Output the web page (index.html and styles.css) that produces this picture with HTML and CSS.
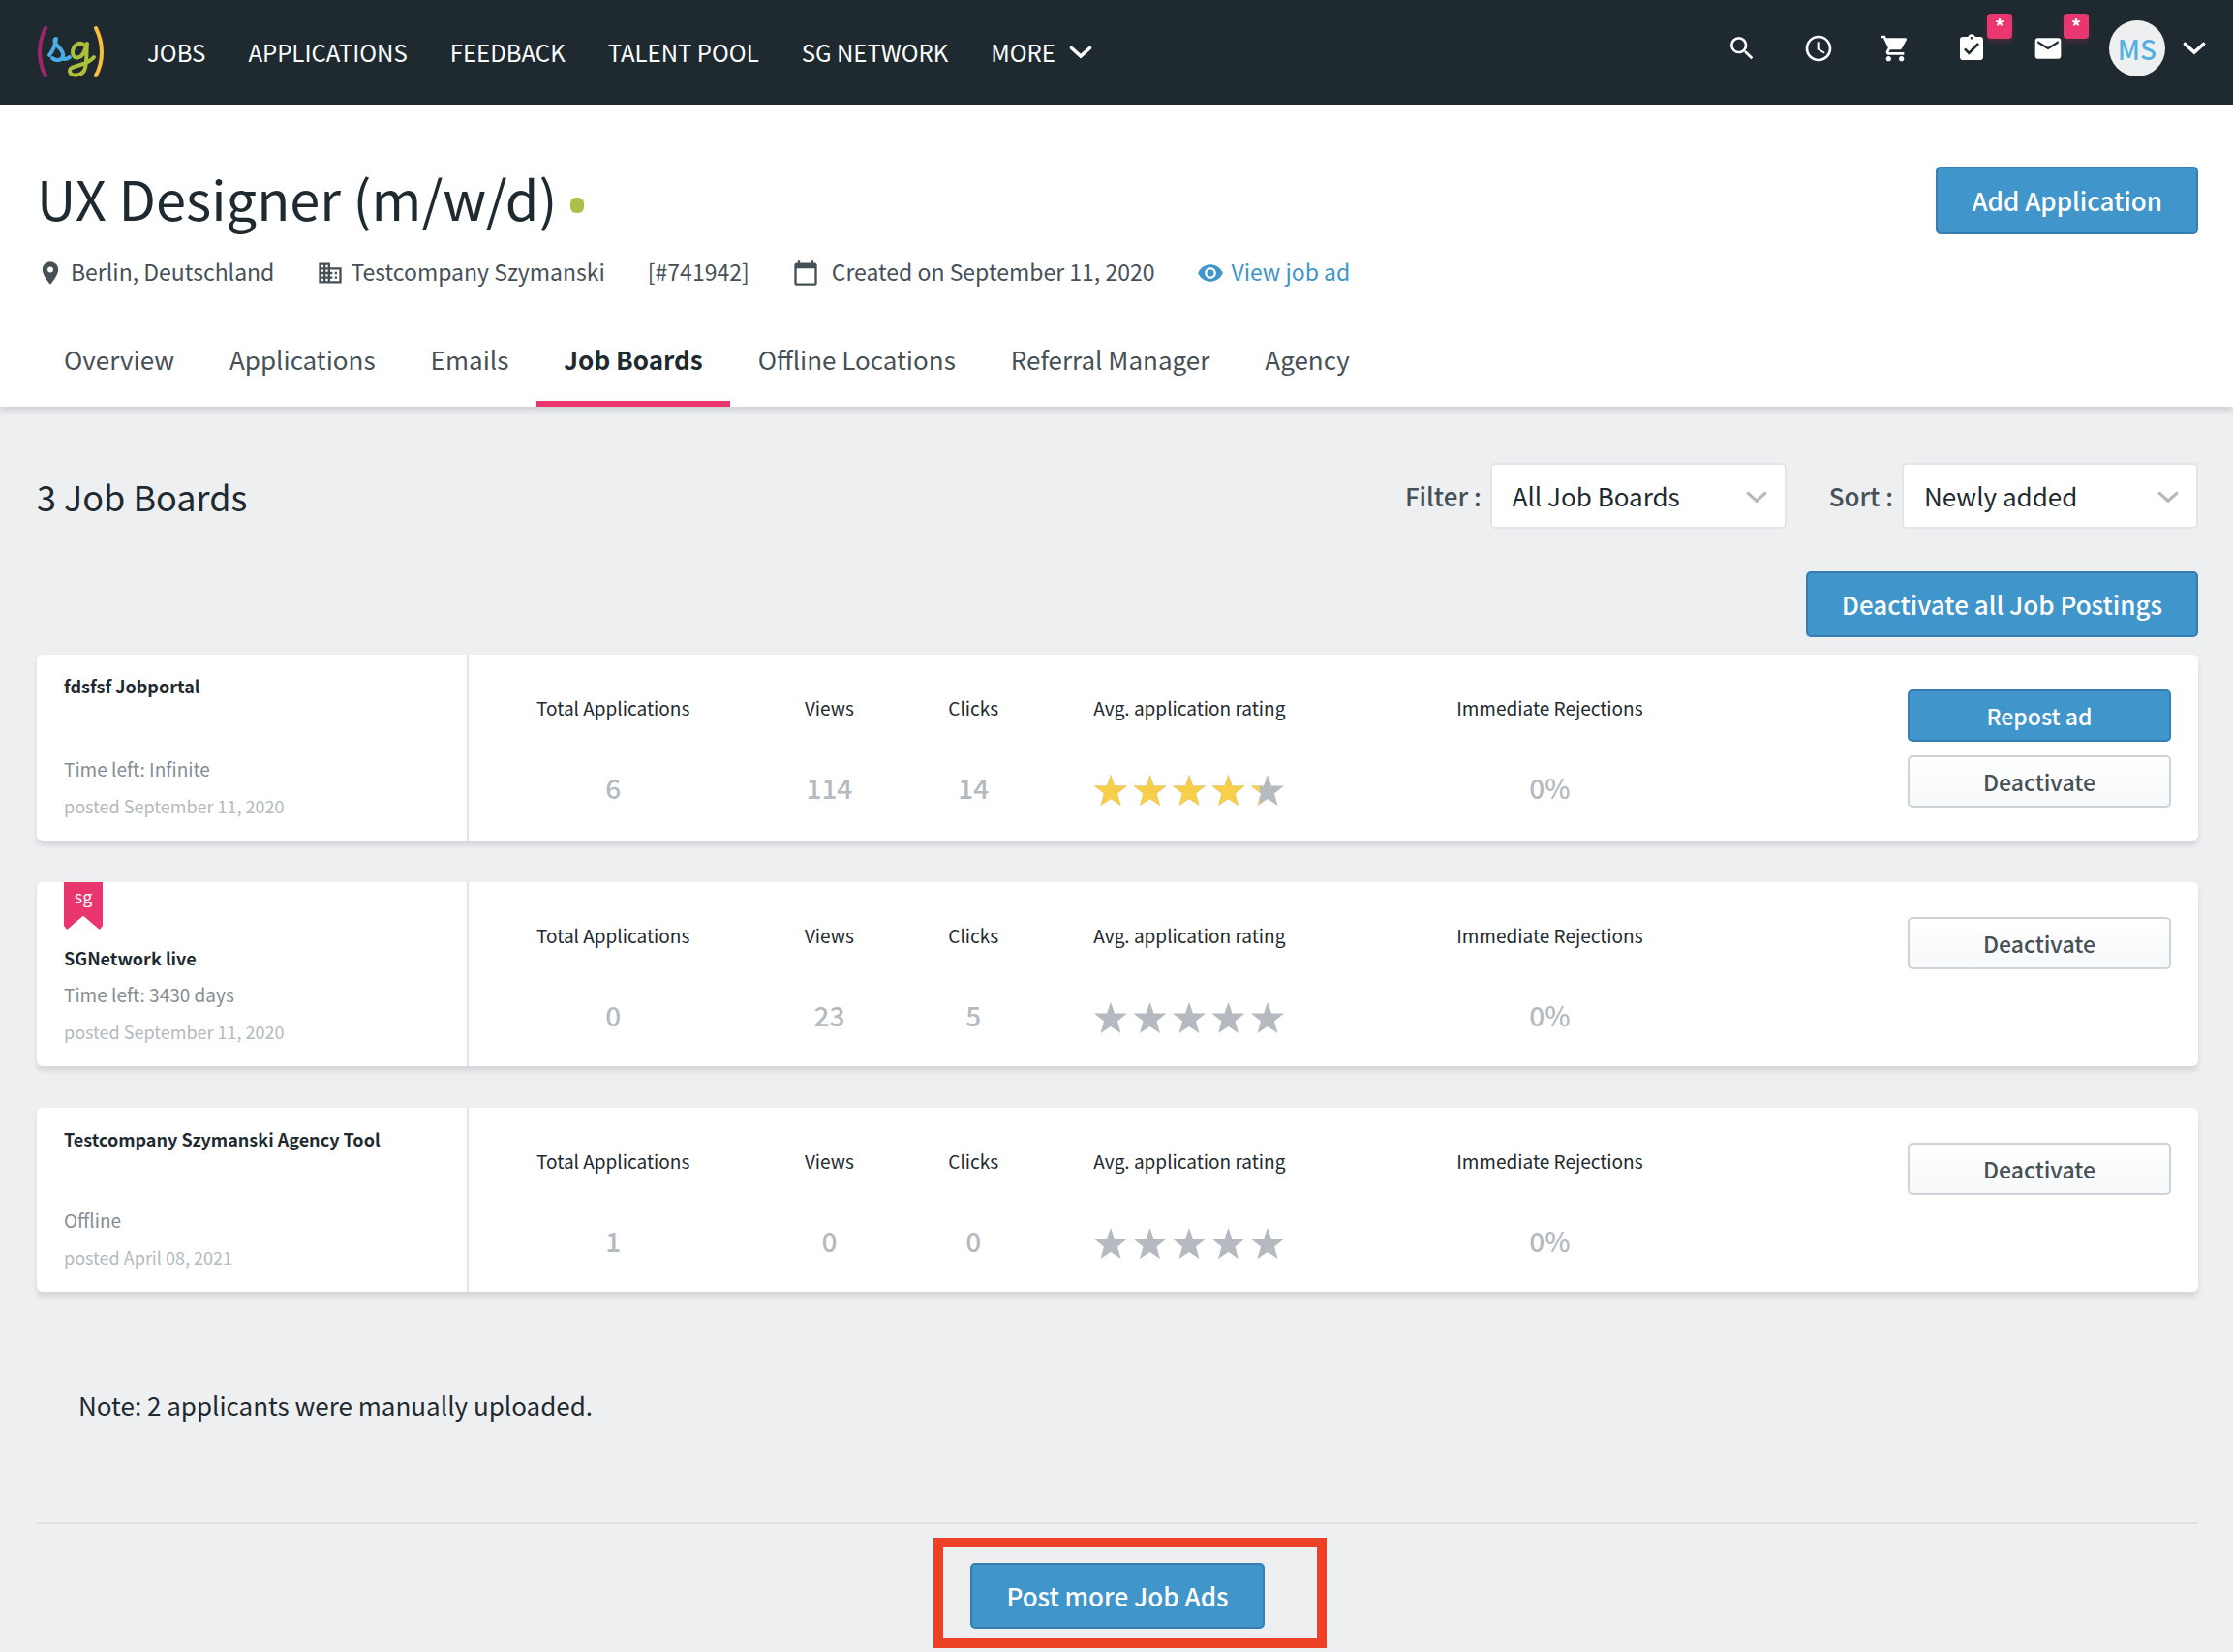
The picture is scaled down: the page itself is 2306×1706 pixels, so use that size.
FILE: index.html
```html
<!DOCTYPE html>
<html lang="en">

<head>
    <meta charset="UTF-8">
    <meta name="viewport" content="width=device-width, initial-scale=1.0">
    <title>UX Designer (m/w/d)</title>
    <link rel="stylesheet" href="styles.css">
</head>

<body>
    <!-- icons that are used more than once -->
    <svg width="0" height="0" class="sprite" aria-hidden="true">
        <symbol id="chevron" viewBox="0 0 24 14">
            <path d="M2.500 2.500L12 11l9.500-8.500" fill="none" stroke="currentColor" stroke-width="3.600" stroke-linecap="round" />
        </symbol>
        <symbol id="stars" viewBox="0 0 196 32">
            <path d="M17 0l4 11.500h13l-10 8 3.500 12.500L17 25l-10.500 7L10 19.500l-10-8h13z" />
            <path d="M57.500 0l4 11.500h13l-10 8L68 32l-10.500-7L47 32l3.500-12.500-10-8h13z" />
            <path d="M98 0l4 11.500h13l-10 8 3.500 12.500L98 25l-10.500 7L91 19.500l-10-8h13z" />
            <path d="M138.500 0l4 11.500h13l-10 8L149 32l-10.500-7L128 32l3.500-12.500-10-8h13z" />
            <path d="M179 0l4 11.500h13l-10 8 3.500 12.500L179 25l-10.500 7 3.500-12.500-10-8h13z" />
        </symbol>
    </svg>

    <header class="topbar">
        <a href="#" class="logo" aria-label="sg">
            <svg width="72" height="54" viewBox="0 0 72 54" fill="none" stroke-linecap="round" stroke-linejoin="round">
                <path d="M9 2C1 18 1 36 9 51" stroke="#a0246c" stroke-width="4" />
                <path d="M61 2c8 16 8 34 0 49" stroke="#f8bf3c" stroke-width="4" />
                <path d="M13 30c4-5 6-10 7-17-3 1-1 5 2 8 4 4 6 7 5 10-1 5-8 5-11 2M26 33c3 2 5 1 8-1" stroke="#4aaee6" stroke-width="4" />
                <path d="M50 20c-6-5-13 0-13 7 0 8 9 7 12-1l3-8c-1 9 0 17-2 25-2 9-16 10-16 3 0-6 17-4 25-14" stroke="#aebf3c" stroke-width="4" />
            </svg>
        </a>
        <nav class="mainnav">
            <a href="#">JOBS</a>
            <a href="#">APPLICATIONS</a>
            <a href="#">FEEDBACK</a>
            <a href="#">TALENT POOL</a>
            <a href="#">SG NETWORK</a>
            <a href="#">MORE <svg width="24" height="14"><use href="#chevron" /></svg></a>
        </nav>
        <div class="tools">
            <button class="tool" aria-label="Search">
                <svg width="32" height="32" viewBox="0 0 24 24"><path d="M15.500 14h-.79l-.28-.27A6.471 6.471 0 0 0 16 9.500 6.500 6.500 0 1 0 9.500 16c1.610 0 3.090-.59 4.230-1.570l.27.28v.79l5 4.990L20.490 19l-4.990-5zm-6 0C7.010 14 5 11.990 5 9.500S7.010 5 9.500 5 14 7.010 14 9.500 11.990 14 9.500 14z" /></svg>
            </button>
            <button class="tool" aria-label="History">
                <svg width="32" height="32" viewBox="0 0 24 24"><path d="M11.990 2C6.470 2 2 6.480 2 12s4.470 10 9.990 10C17.520 22 22 17.520 22 12S17.520 2 11.990 2zM12 20c-4.420 0-8-3.580-8-8s3.580-8 8-8 8 3.580 8 8-3.580 8-8 8zm.5-13H11v6l5.250 3.150.75-1.230-4.500-2.670z" /></svg>
            </button>
            <button class="tool" aria-label="Cart">
                <svg width="32" height="32" viewBox="0 0 24 24"><path d="M7 18c-1.100 0-1.990.9-1.990 2S5.900 22 7 22s2-.9 2-2-.9-2-2-2zM1 2v2h2l3.600 7.590-1.350 2.450c-.16.280-.25.610-.25.960 0 1.100.9 2 2 2h12v-2H7.420c-.14 0-.25-.11-.25-.25l.03-.12.900-1.630h7.450c.75 0 1.410-.41 1.750-1.030l3.580-6.490c.08-.14.120-.31.120-.48 0-.55-.45-1-1-1H5.210l-.94-2H1zm16 16c-1.100 0-1.990.9-1.990 2s.89 2 1.990 2 2-.9 2-2-.9-2-2-2z" /></svg>
            </button>
            <button class="tool" aria-label="Tasks">
                <svg width="32" height="32" viewBox="0 0 24 24"><path d="M19 3h-4.180C14.400 1.840 13.300 1 12 1s-2.400.84-2.820 2H5c-1.100 0-2 .9-2 2v14c0 1.100.9 2 2 2h14c1.100 0 2-.9 2-2V5c0-1.100-.9-2-2-2zm-7 0c.55 0 1 .45 1 1s-.45 1-1 1-1-.45-1-1 .45-1 1-1zm-2 14l-4-4 1.410-1.410L10 14.170l6.590-6.590L18 9l-8 8z" /></svg>
                <span class="badge">*</span>
            </button>
            <button class="tool" aria-label="Messages">
                <svg width="32" height="32" viewBox="0 0 24 24"><path d="M20 4H4c-1.100 0-2 .9-2 2v12c0 1.100.9 2 2 2h16c1.100 0 2-.9 2-2V6c0-1.100-.9-2-2-2zm0 4l-8 5-8-5V6l8 5 8-5v2z" /></svg>
                <span class="badge">*</span>
            </button>
            <button class="user" aria-label="Account">
                <span class="avatar">MS</span>
                <svg width="24" height="14"><use href="#chevron" /></svg>
            </button>
        </div>
    </header>

    <section class="jobhead">
        <div class="titlerow">
            <h1>UX Designer (m/w/d)<span class="dot"></span></h1>
            <button class="btn btn-blue btn-add">Add Application</button>
        </div>
        <ul class="meta">
            <li><svg width="28" height="28" viewBox="0 0 24 24"><path d="M12 2C8.130 2 5 5.130 5 9c0 5.250 7 13 7 13s7-7.750 7-13c0-3.870-3.130-7-7-7zm0 9.500a2.500 2.500 0 0 1 0-5 2.500 2.500 0 0 1 0 5z" /></svg>Berlin, Deutschland</li>
            <li><svg width="28" height="28" viewBox="0 0 24 24"><path d="M12 7V3H2v18h20V7H12zM6 19H4v-2h2v2zm0-4H4v-2h2v2zm0-4H4V9h2v2zm0-4H4V5h2v2zm4 12H8v-2h2v2zm0-4H8v-2h2v2zm0-4H8V9h2v2zm0-4H8V5h2v2zm10 12h-8v-2h2v-2h-2v-2h2v-2h-2V9h8v10zm-2-8h-2v2h2v-2zm0 4h-2v2h2v-2z" /></svg>Testcompany Szymanski</li>
            <li>[#741942]</li>
            <li class="created"><svg width="28" height="28" viewBox="0 0 24 24"><path d="M20 3h-1V1h-2v2H7V1H5v2H4c-1.100 0-2 .9-2 2v16c0 1.100.9 2 2 2h16c1.100 0 2-.9 2-2V5c0-1.100-.9-2-2-2zm0 18H4V8h16v13z" /></svg>Created on September 11, 2020</li>
            <li><a href="#"><svg width="28" height="28" viewBox="0 0 24 24"><path d="M12 4.500C7 4.500 2.730 7.610 1 12c1.730 4.390 6 7.500 11 7.500s9.270-3.110 11-7.500c-1.730-4.390-6-7.500-11-7.500zM12 17c-2.760 0-5-2.240-5-5s2.240-5 5-5 5 2.240 5 5-2.240 5-5 5zm0-8a3 3 0 1 0 0 6 3 3 0 0 0 0-6z" /></svg>View job ad</a></li>
        </ul>
        <nav class="tabs">
            <a href="#">Overview</a>
            <a href="#">Applications</a>
            <a href="#">Emails</a>
            <a href="#" class="current">Job Boards</a>
            <a href="#">Offline Locations</a>
            <a href="#">Referral Manager</a>
            <a href="#">Agency</a>
        </nav>
    </section>

    <main>
        <div class="listhead">
            <h2>3 Job Boards</h2>
            <div class="field">
                <label for="filter">Filter :</label>
                <div class="select">
                    <select id="filter">
                        <option>All Job Boards</option>
                    </select>
                    <svg width="22" height="13"><use href="#chevron" /></svg>
                </div>
            </div>
            <div class="field">
                <label for="sort">Sort :</label>
                <div class="select">
                    <select id="sort">
                        <option>Newly added</option>
                    </select>
                    <svg width="22" height="13"><use href="#chevron" /></svg>
                </div>
            </div>
        </div>
        <div class="bulk">
            <button class="btn btn-blue">Deactivate all Job Postings</button>
        </div>

        <article class="card">
            <div class="info">
                <h3>fdsfsf Jobportal</h3>
                <p class="left">Time left: Infinite</p>
                <p class="posted">posted September 11, 2020</p>
            </div>
            <dl class="stats">
                <div class="w2"><dt>Total Applications</dt><dd>6</dd></div>
                <div><dt>Views</dt><dd>114</dd></div>
                <div><dt>Clicks</dt><dd>14</dd></div>
                <div class="w2"><dt>Avg. application rating</dt>
                    <dd class="rating">
                        <svg width="196" height="32"><use href="#stars" /></svg>
                        <span class="fill" style="width: 87%"><svg width="196" height="32"><use href="#stars" /></svg></span>
                    </dd>
                </div>
                <div class="w3"><dt>Immediate Rejections</dt><dd>0%</dd></div>
            </dl>
            <div class="actions">
                <button class="btn btn-blue btn-small">Repost ad</button>
                <button class="btn btn-small">Deactivate</button>
            </div>
        </article>

        <article class="card">
            <div class="info">
                <span class="ribbon">sg</span>
                <h3>SGNetwork live</h3>
                <p class="left">Time left: 3430 days</p>
                <p class="posted">posted September 11, 2020</p>
            </div>
            <dl class="stats">
                <div class="w2"><dt>Total Applications</dt><dd>0</dd></div>
                <div><dt>Views</dt><dd>23</dd></div>
                <div><dt>Clicks</dt><dd>5</dd></div>
                <div class="w2"><dt>Avg. application rating</dt>
                    <dd class="rating"><svg width="196" height="32"><use href="#stars" /></svg></dd>
                </div>
                <div class="w3"><dt>Immediate Rejections</dt><dd>0%</dd></div>
            </dl>
            <div class="actions">
                <button class="btn btn-small">Deactivate</button>
            </div>
        </article>

        <article class="card">
            <div class="info">
                <h3>Testcompany Szymanski Agency Tool</h3>
                <p class="left">Offline</p>
                <p class="posted">posted April 08, 2021</p>
            </div>
            <dl class="stats">
                <div class="w2"><dt>Total Applications</dt><dd>1</dd></div>
                <div><dt>Views</dt><dd>0</dd></div>
                <div><dt>Clicks</dt><dd>0</dd></div>
                <div class="w2"><dt>Avg. application rating</dt>
                    <dd class="rating"><svg width="196" height="32"><use href="#stars" /></svg></dd>
                </div>
                <div class="w3"><dt>Immediate Rejections</dt><dd>0%</dd></div>
            </dl>
            <div class="actions">
                <button class="btn btn-small">Deactivate</button>
            </div>
        </article>

        <p class="note">Note: 2 applicants were manually uploaded.</p>

        <footer class="more">
            <div class="highlight">
                <button class="btn btn-blue">Post more Job Ads</button>
            </div>
        </footer>
    </main>
</body>

</html>
```
FILE: styles.css
```css
* {
    padding: 0;
    margin: 0;
    box-sizing: border-box;
    list-style: none;
}

body {
    background: #eeeff1;
    color: #1e2a30;
    font-family: "Noto Sans CJK SC", "Noto Sans", sans-serif;
    font-size: 26px;
    line-height: 36px;
}

a {
    color: inherit;
    text-decoration: none;
}

button,
select {
    font: inherit;
    color: inherit;
    cursor: pointer;
}

svg {
    display: block;
    fill: currentColor;
    flex: none;
}

.sprite {
    position: absolute;
}

/* top bar */
.topbar {
    display: flex;
    align-items: center;
    height: 108px;
    padding: 0 28px 0 38px;
    background: #1e2a30;
    color: #fff;
}

.logo {
    margin-right: 42px;
}

.logo svg {
    fill: none;
}

.mainnav {
    display: flex;
    gap: 44px;
    font-size: 24px;
}

.mainnav a {
    display: flex;
    align-items: center;
    gap: 14px;
}

.tools {
    display: flex;
    align-items: center;
    margin-left: auto;
    padding-bottom: 8px;
    gap: 47px;
}

.tool {
    position: relative;
    border: 0;
    background: none;
}

.badge {
    position: absolute;
    left: 32px;
    top: -20px;
    width: 26px;
    height: 26px;
    border-radius: 4px;
    background: #ea366e;
    box-shadow: 0 4px 6px rgba(234, 54, 110, .2);
    font-size: 20px;
    font-weight: 700;
    line-height: 26px;
}

.user {
    display: flex;
    align-items: center;
    gap: 18px;
    border: 0;
    background: none;
}

.avatar {
    width: 58px;
    height: 58px;
    border-radius: 50%;
    background: #eeeff1;
    color: #52b0e4;
    font-size: 28px;
    font-weight: 500;
    line-height: 58px;
}

/* job header */
.jobhead {
    position: relative;
    padding: 64px 36px 0 38px;
    background: #fff;
    box-shadow: 0 4px 6px rgba(30, 42, 48, .15);
}

.titlerow {
    display: flex;
    justify-content: space-between;
    height: 90px;
}

h1 {
    display: flex;
    font-size: 56px;
    font-weight: 400;
    line-height: 64px;
}

.dot {
    width: 14px;
    height: 16px;
    margin: 32px 0 0 14px;
    border-radius: 6px;
    background: #aebf48;
}

.btn {
    height: 68px;
    padding: 0 35px;
    border: 2px solid #ced3d7;
    border-radius: 5px;
    background: linear-gradient(#fff, #f7f8f9);
    color: #465057;
    font-weight: 500;
}

.btn-blue {
    border-color: #357db3;
    background: #4095cb;
    color: #fff;
}

.btn-add {
    height: 70px;
}

.btn-small {
    height: 54px;
    font-size: 23px;
    line-height: 32px;
}

.meta {
    display: flex;
    gap: 44px;
    color: #465057;
    font-size: 23px;
}

.meta li,
.meta a {
    display: flex;
    align-items: center;
    gap: 7px;
}

.meta svg {
    margin-top: 4px;
}

.meta .created {
    gap: 13px;
}

.meta a {
    color: #4095cb;
}

.tabs {
    display: flex;
    gap: 1px;
    margin-top: 50px;
    color: #465057;
}

.tabs a {
    height: 72px;
    padding: 0 28px;
    border-bottom: 6px solid transparent;
    line-height: 46px;
}

.tabs .current {
    border-color: #ea366e;
    color: #1e2a30;
    font-weight: 700;
}

/* list of job boards */
main {
    padding: 58px 36px 0 38px;
}

.listhead {
    display: flex;
    align-items: center;
    gap: 44px;
}

h2 {
    margin-right: auto;
    font-size: 36px;
    font-weight: 400;
}

.field {
    display: flex;
    align-items: center;
    gap: 9px;
}

.field label {
    color: #465057;
    font-weight: 500;
}

.select {
    position: relative;
}

.select select {
    display: block;
    width: 306px;
    height: 68px;
    padding: 0 21px;
    border: 2px solid #e2e4e8;
    border-radius: 5px;
    background: #fff;
    appearance: none;
}

.select svg {
    position: absolute;
    right: 20px;
    top: 29px;
    color: #b4babf;
    pointer-events: none;
}

.bulk {
    display: flex;
    justify-content: flex-end;
    margin: 44px 0 18px;
}

.card {
    display: flex;
    min-height: 190px;
    margin-bottom: 43px;
    border-radius: 6px;
    background: #fff;
    box-shadow: 0 5px 5px rgba(30, 42, 48, .12);
}

.info {
    display: flex;
    flex-direction: column;
    width: 20%;
    padding: 18px 28px 17px;
    border-right: 2px solid #e2e4e8;
}

h3 {
    font-size: 18px;
    font-weight: 700;
    line-height: 28px;
}

.left {
    margin-top: auto;
    color: #858d93;
    font-size: 19px;
    line-height: 38px;
}

.posted {
    color: #b4babf;
    font-size: 18px;
    line-height: 38px;
}

.ribbon {
    width: 40px;
    height: 49px;
    margin: -18px 0 15px;
    background: #ea366e;
    clip-path: polygon(0 0, 100% 0, 100% 92%, 92% 100%, 50% 71%, 8% 100%, 0 92%);
    color: #fff;
    font-size: 18px;
    line-height: 28px;
    text-align: center;
}

.stats {
    display: grid;
    grid-template-columns: repeat(9, 1fr);
    width: 60%;
    padding-top: 40px;
    text-align: center;
}

.w2 {
    grid-column: span 2;
}

.w3 {
    grid-column: span 3;
}

dt {
    font-size: 19px;
    line-height: 30px;
}

dd {
    margin-top: 49px;
    color: #b4babf;
    font-size: 28px;
    font-weight: 500;
}

.rating {
    position: relative;
    width: 196px;
    margin: 54px auto 0;
}

/* yellow stars lie over the grey ones, cut at the rating */
.fill {
    position: absolute;
    left: 0;
    top: 0;
    overflow: hidden;
    color: #f6ce4c;
}

.actions {
    display: flex;
    flex-direction: column;
    gap: 14px;
    width: 328px;
    margin-left: auto;
    padding: 36px 28px 34px;
}

.note {
    margin-top: 99px;
    padding: 0 43px;
}

.more {
    display: flex;
    justify-content: center;
    margin-top: 103px;
    padding-top: 14px;
    border-top: 2px solid #dfe1e4;
}

.highlight {
    margin-left: 26px;
    padding: 16px 54px 10px 28px;
    border: 10px solid #ec4126;
}
```
